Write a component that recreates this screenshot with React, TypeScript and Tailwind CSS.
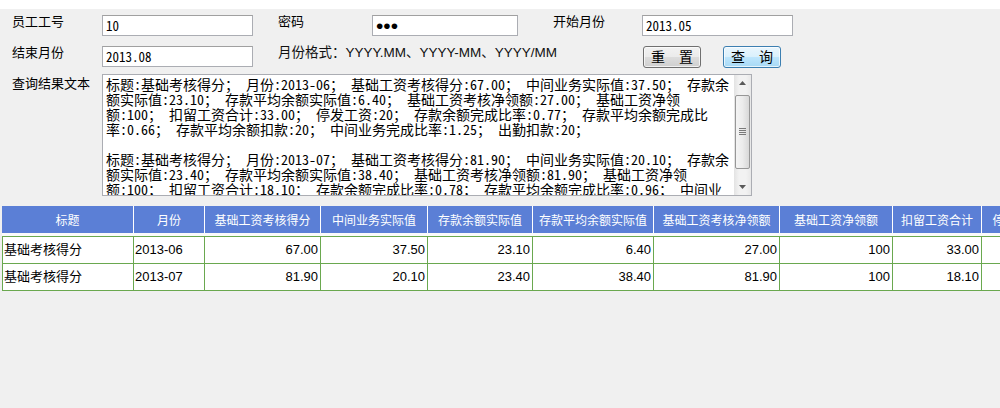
import React from "react";

const headers = [
  "标题",
  "月份",
  "基础工资考核得分",
  "中间业务实际值",
  "存款余额实际值",
  "存款平均余额实际值",
  "基础工资考核净领额",
  "基础工资净领额",
  "扣留工资合计",
  "停发工资",
  "存款余额完成比率",
];

const rows = [
  ["基础考核得分", "2013-06", "67.00", "37.50", "23.10", "6.40", "27.00", "100", "33.00", "20", "0.77"],
  ["基础考核得分", "2013-07", "81.90", "20.10", "23.40", "38.40", "81.90", "100", "18.10", "", "0.78"],
];

const resultLines = [
  "标题:基础考核得分； 月份:2013-06； 基础工资考核得分:67.00； 中间业务实际值:37.50； 存款余",
  "额实际值:23.10； 存款平均余额实际值:6.40； 基础工资考核净领额:27.00； 基础工资净领",
  "额:100； 扣留工资合计:33.00； 停发工资:20； 存款余额完成比率:0.77； 存款平均余额完成比",
  "率:0.66； 存款平均余额扣款:20； 中间业务完成比率:1.25； 出勤扣款:20；",
  "",
  "标题:基础考核得分； 月份:2013-07； 基础工资考核得分:81.90； 中间业务实际值:20.10； 存款余",
  "额实际值:23.40； 存款平均余额实际值:38.40； 基础工资考核净领额:81.90； 基础工资净领",
  "额:100； 扣留工资合计:18.10； 存款余额完成比率:0.78； 存款平均余额完成比率:0.96； 中间业",
];

function Label({ text, width }: { text: string; width: string }) {
  return <div className={`${width} shrink-0 text-[13px] leading-[14px] text-black`}>{text}</div>;
}

function Field({ value, width, password }: { value: string; width: string; password?: boolean }) {
  return (
    <input
      type={password ? "password" : "text"}
      readOnly
      defaultValue={value}
      className={`${width} h-[21px] shrink-0 border border-[#abadb3] border-t-[#a0a0a0] bg-white pl-[3px] text-black outline-none ${
        password
          ? "font-['Liberation_Sans',sans-serif] text-[21px] leading-none"
          : "font-['Noto_Sans_Mono_CJK_SC','Liberation_Mono',monospace] text-[13px]"
      }`}
    />
  );
}

function ScrollArrow({ up }: { up?: boolean }) {
  return (
    <div className="flex h-[17px] items-center justify-center">
      <svg width="7" height="4" viewBox="0 0 7 4">
        <path d={up ? "M0 4 L3.5 0 L7 4 Z" : "M0 0 L3.5 4 L7 0 Z"} fill="#5a5a5a" />
      </svg>
    </div>
  );
}

function ScrollBar() {
  return (
    <div className="flex w-[17px] shrink-0 flex-col bg-[linear-gradient(90deg,#e3e3e3,#f2f2f2_30%,#f2f2f2_70%,#e8e8e8)]">
      <ScrollArrow up />
      <div className="flex-1 px-[1px] pt-[3px] pb-[10px]">
        <div className="flex h-[74px] items-center justify-center rounded-[2px] border border-[#979797] bg-[linear-gradient(90deg,#f4f4f4,#ececec_50%,#d8d8d8)]">
          <div className="flex flex-col gap-[1px]">
            <div className="h-[1px] w-[7px] bg-[#7a7a7a]" />
            <div className="h-[1px] w-[7px] bg-[#7a7a7a]" />
            <div className="h-[1px] w-[7px] bg-[#7a7a7a]" />
            <div className="h-[1px] w-[7px] bg-[#7a7a7a]" />
          </div>
        </div>
      </div>
      <ScrollArrow />
    </div>
  );
}

function WinButton({ label, focused }: { label: string; focused?: boolean }) {
  return (
    <button
      type="button"
      className={`h-[22px] w-[58px] shrink-0 rounded-[3px] border text-[14px] leading-[20px] text-black shadow-[inset_0_0_0_1px_rgba(255,255,255,0.7)] ${
        focused
          ? "border-[#3c7fb1] bg-[linear-gradient(#eaf6fd,#d9f0fc_50%,#bee6fd_50%,#a7d9f5)]"
          : "border-[#707070] bg-[linear-gradient(#f2f2f2,#ebebeb_50%,#dddddd_50%,#cfcfcf)]"
      }`}
    >
      {label}
    </button>
  );
}

export default function App() {
  return (
    <div className="h-[408px] w-[1000px] overflow-hidden bg-[#f0f0f0] font-['Liberation_Sans','Noto_Sans_CJK_SC',sans-serif]">
      <div className="h-[9px] bg-white" />

      {/* query form */}
      <div className="pl-[12px] pt-[6px]">
        <div className="flex h-[21px] items-start">
          <Label text="员工工号" width="w-[90px]" />
          <Field value="10" width="w-[151px]" />
          <div className="w-[25px] shrink-0" />
          <Label text="密码" width="w-[94px]" />
          <Field value="abc" width="w-[146px]" password />
          <div className="w-[35px] shrink-0" />
          <Label text="开始月份" width="w-[89px]" />
          <Field value="2013.05" width="w-[151px]" />
        </div>

        <div className="mt-[10px] flex h-[22px] items-start">
          <Label text="结束月份" width="w-[90px]" />
          <Field value="2013.08" width="w-[151px]" />
          <div className="w-[25px] shrink-0" />
          <div className="w-[365px] shrink-0 text-[13.5px] leading-[14px] text-[#111]">
            月份格式：YYYY.MM、YYYY-MM、YYYY/MM
          </div>
          <WinButton label="重　置" />
          <div className="w-[22px] shrink-0" />
          <WinButton label="查　询" focused />
        </div>

        <div className="mt-[6px] flex items-start">
          <div className="w-[90px] shrink-0 pt-[3px] text-[13px] leading-[14px] text-black">查询结果文本</div>
          <div className="flex h-[122px] w-[650px] shrink-0 border border-[#abadb3] bg-white">
            <div className="flex-1 overflow-hidden pl-[3px] pt-[2px] font-['Noto_Sans_Mono_CJK_SC','Noto_Sans_CJK_SC',monospace] text-[14px] leading-[15px] text-black">
              {resultLines.map((line, i) => (
                <div key={i} className="h-[15px] whitespace-pre">
                  {line}
                </div>
              ))}
            </div>
            <ScrollBar />
          </div>
        </div>
      </div>

      {/* result grid */}
      <div className="ml-[2px] mt-[10px] w-[998px] overflow-hidden">
        <div className="grid w-max grid-cols-[132px_71px_116px_107px_105px_121px_126px_113px_89px_70px_130px] bg-[#5b7fd6]">
          {headers.map((h) => (
            <div
              key={h}
              className="h-[27px] border-r border-white text-center text-[12px] leading-[27px] text-white font-['Noto_Sans_CJK_SC',sans-serif]"
            >
              {h}
            </div>
          ))}
        </div>
        <div className="h-[3px] bg-[#fafafa]" />
        <div className="w-max border-l border-t border-[#6aa84f]">
          {rows.map((r, ri) => (
            <div
              key={ri}
              className="grid grid-cols-[131px_71px_116px_107px_105px_121px_126px_113px_89px_70px_130px] bg-white"
            >
              {r.map((c, ci) => (
                <div
                  key={ci}
                  className={`flex h-[27px] items-center border-b border-r border-[#6aa84f] text-[13px] text-black ${
                    ci < 2 ? "pl-[1px]" : "justify-end pr-[2px]"
                  }`}
                >
                  {c}
                </div>
              ))}
            </div>
          ))}
        </div>
      </div>
    </div>
  );
}
